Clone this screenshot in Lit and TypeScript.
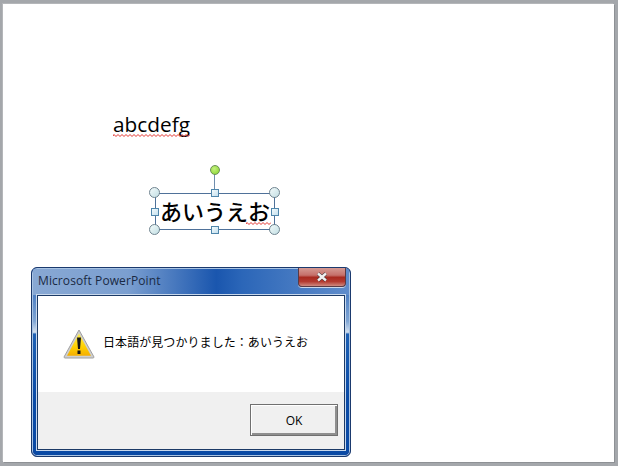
import { LitElement, html, css, svg } from "lit";
import { customElement } from "lit/decorators.js";

const squiggle = (w: number) => {
  let d = "M0 2";
  for (let x = 0; x < w; x += 2) d += ` L${x + 1} ${(x / 2) % 2 === 0 ? 0.5 : 2.5}`;
  return html`<svg class="sq" width=${w} height="3" viewBox="0 0 ${w} 3"><path d=${d} fill="none" stroke="#e2332c" stroke-width="1"/></svg>`;
};

const handles = [
  [155, 193, "c"], [215, 193, "s"], [275, 193, "c"],
  [155, 212, "s"], [275, 212, "s"],
  [155, 230, "c"], [215, 230, "s"], [275, 230, "c"],
] as const;

@customElement("app-root")
export class AppRoot extends LitElement {
  static styles = css`
    :host { display: block; width: 618px; height: 466px; position: relative; overflow: hidden;
      background: #a4a7ab; font-family: "Noto Sans CJK JP", "Open Sans", sans-serif; }
    .slide { position: absolute; left: 3px; top: 4px; width: 611px; height: 458px; background: #fff;
      box-shadow: 1px 1px 0 #8e9195, -1px -1px 0 #b4b6b9; }
    .latin { position: absolute; left: 113px; top: 111px; font: 20.8px/26px "Open Sans", sans-serif; color: #000; }
    .sq { position: absolute; display: block; }
    .sq1 { position: absolute; left: 113px; top: 134px; }
    .sq2 { position: absolute; left: 246px; top: 222px; }
    .box { position: absolute; left: 155px; top: 193px; width: 118px; height: 35px; border: 1px solid #4f7199;
      display: flex; align-items: flex-start; justify-content: center; font-size: 22px; line-height: 33px; font-weight: 500; color: #000; white-space: nowrap; }
    .stem { position: absolute; left: 214px; top: 174px; width: 1px; height: 19px; background: #6f8eae; }
    .rot { position: absolute; left: 210px; top: 165px; width: 8px; height: 8px; border-radius: 50%;
      background: radial-gradient(circle at 40% 35%, #c4f07e, #84d42c); border: 1px solid #6c8f57; }
    .h { position: absolute; box-sizing: border-box; }
    .c { width: 11px; height: 11px; margin: -6px 0 0 -6px; border-radius: 50%; border: 1px solid #6f8490;
      background: linear-gradient(135deg, #f2fafa, #c3dfe4); }
    .s { width: 8px; height: 8px; margin: -4px 0 0 -4px; border: 1px solid #4f86ab;
      background: linear-gradient(135deg, #f2fafc, #c5e0ee); }

    .dialog { position: absolute; left: 31px; top: 267px; width: 320px; height: 190px; box-sizing: border-box;
      border: 1px solid #1b3a6e; border-radius: 6px; overflow: hidden;
      background: #0c3f95; box-shadow: inset 0 0 0 1px #a8c3e3; }
    .frame { position: absolute; inset: 1px; border-radius: 5px;
      background: linear-gradient(180deg, #6f97cf 0, #5b8ac8 8%, #4e80c4 14%, #7fa5d4 28%, #d3e0ef 34%, #1d60b4 35%, #0a4ba7 70%, #0a4aa5 100%); }
    .sheen { position: absolute; left: 0; right: 0; top: 0; height: 26px;
      background: linear-gradient(90deg, #88a8d3 0, #7b9fd0 30%, #1a56ae 58%, #2b66b8 66%, #5f8ccb 100%); }
    .title { position: absolute; left: 5px; top: 3px; font: 12px/18px "Open Sans", sans-serif; color: #1a2a44; letter-spacing: .1px; }
    .close { position: absolute; left: 265px; top: -1px; width: 48px; height: 19px; box-sizing: border-box;
      border: 1px solid #5a3a44; border-top: 0; border-radius: 0 0 4px 4px; display: flex; align-items: center; justify-content: center;
      background: linear-gradient(180deg, #d59a93 0, #c5706a 40%, #a82a20 52%, #b33a30 75%, #cf8a80 100%); box-shadow: 0 1px 0 #c9d8ea; }
    .client { position: absolute; left: 4px; top: 26px; width: 308px; height: 155px; box-sizing: border-box;
      border: 1px solid #1c3a66; background: #fff; display: flex; flex-direction: column; outline: 1px solid #c8d8ec; }
    .msg { flex: none; height: 96px; display: flex; align-items: flex-start; }
    .icon { margin: 33px 0 0 25px; flex: none; display: block; }
    .text { margin: 37px 0 0 8px; font-size: 12px; line-height: 18px; color: #000; white-space: nowrap; letter-spacing: .07px; }
    .foot { flex: 1; background: #f0f0f0; display: flex; justify-content: flex-end; align-items: flex-start; padding: 12px 6px 0 0; }
    .ok { width: 88px; height: 32px; box-sizing: border-box; border: 1px solid #707070; background: #f0f0f0; padding: 0;
      box-shadow: inset 1px 1px 0 #fff, inset -2px -2px 0 #8f8f8f; font: 12px "Open Sans", sans-serif; color: #000; }
  `;

  render() {
    return html`
      <div class="slide"></div>
      <div class="latin">abcdefg</div>
      <div class="sq1">${squiggle(77)}</div>
      <div class="box">あいうえお</div>
      <div class="sq2">${squiggle(25)}</div>
      <div class="stem"></div>
      <div class="rot"></div>
      ${handles.map(([x, y, k]) => html`<div class="h ${k}" style="left:${x}px;top:${y}px"></div>`)}
      <div class="dialog">
        <div class="frame">
          <div class="sheen"></div>
          <div class="title">Microsoft PowerPoint</div>
          <div class="close">
            <svg width="14" height="10" viewBox="0 0 14 10">
              <path d="M3 1.5 L11 8.5 M11 1.5 L3 8.5" stroke="#3a2f33" stroke-width="3.6" fill="none"/>
              <path d="M3 1.5 L11 8.5 M11 1.5 L3 8.5" stroke="#f1f1f1" stroke-width="2.4" fill="none"/>
            </svg>
          </div>
          <div class="client">
            <div class="msg">
              <svg class="icon" width="32" height="30" viewBox="0 0 32 30">
                <defs>
                  <linearGradient id="y" x1="0" y1="0" x2="0" y2="1">
                    <stop offset="0" stop-color="#ffee50"/><stop offset=".6" stop-color="#ffd000"/><stop offset="1" stop-color="#f5ae00"/>
                  </linearGradient>
                </defs>
                <path d="M16 1 L31 28 Q31 29 30 29 L2 29 Q1 29 1 28 Z" fill="#cfcfcf" stroke="#a0a0a0" stroke-linejoin="round"/>
                ${svg`<path d="M16 4.5 L28 26.8 L4 26.8 Z" fill="url(#y)"/>`}
                <path d="M14 8.5 H18 L17 20 H15 Z" fill="#141414"/>
                <rect x="14.5" y="21.5" width="3" height="3.5" fill="#141414"/>
              </svg>
              <div class="text">日本語が見つかりました：あいうえお</div>
            </div>
            <div class="foot"><button class="ok">OK</button></div>
          </div>
        </div>
      </div>
    `;
  }
}
